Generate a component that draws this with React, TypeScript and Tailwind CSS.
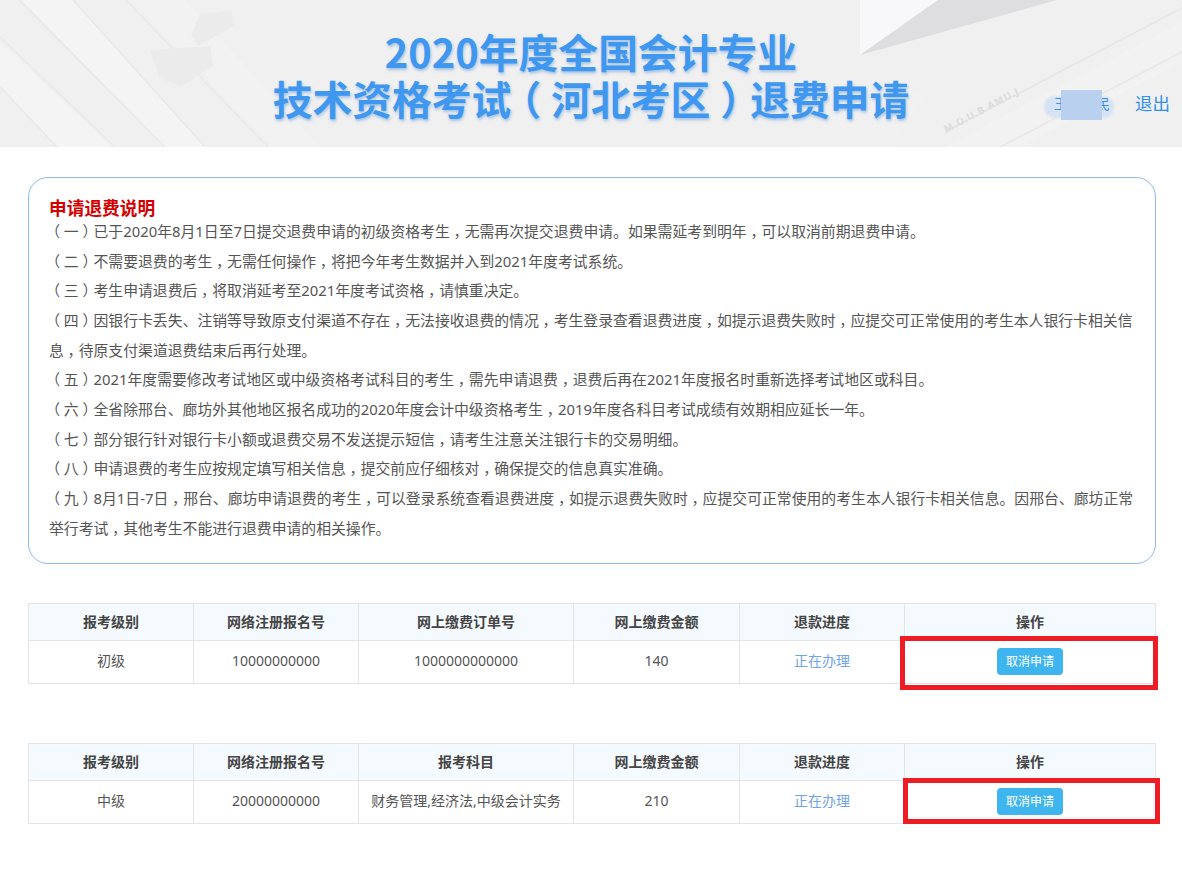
import React from 'react';

const notes = [
  '（一）已于2020年8月1日至7日提交退费申请的初级资格考生，无需再次提交退费申请。如果需延考到明年，可以取消前期退费申请。',
  '（二）不需要退费的考生，无需任何操作，将把今年考生数据并入到2021年度考试系统。',
  '（三）考生申请退费后，将取消延考至2021年度考试资格，请慎重决定。',
  '（四）因银行卡丢失、注销等导致原支付渠道不存在，无法接收退费的情况，考生登录查看退费进度，如提示退费失败时，应提交可正常使用的考生本人银行卡相关信息，待原支付渠道退费结束后再行处理。',
  '（五）2021年度需要修改考试地区或中级资格考试科目的考生，需先申请退费，退费后再在2021年度报名时重新选择考试地区或科目。',
  '（六）全省除邢台、廊坊外其他地区报名成功的2020年度会计中级资格考生，2019年度各科目考试成绩有效期相应延长一年。',
  '（七）部分银行针对银行卡小额或退费交易不发送提示短信，请考生注意关注银行卡的交易明细。',
  '（八）申请退费的考生应按规定填写相关信息，提交前应仔细核对，确保提交的信息真实准确。',
  '（九）8月1日-7日，邢台、廊坊申请退费的考生，可以登录系统查看退费进度，如提示退费失败时，应提交可正常使用的考生本人银行卡相关信息。因邢台、廊坊正常举行考试，其他考生不能进行退费申请的相关操作。',
];

// the original font centres full-width punctuation in its box, Noto hugs the neighbour:
// trim it to half width with "halt" and pad it back to one em
const Centred = ({ text }: { text: string }) => (
  <>
    {text.split(/([（），])/).map((part, i) =>
      /^[（），]$/.test(part) ? (
        <span key={i} className="px-[0.25em] [font-feature-settings:'halt']">{part}</span>
      ) : (
        part
      ),
    )}
  </>
);

const HeaderArt = () => (
  <svg className="absolute inset-0 h-full w-full" viewBox="0 0 1182 147" preserveAspectRatio="none">
    {/* left: pale keyboard-like strips */}
    <g fill="#f4f4f4">
      <path d="M22 0 L73 0 L205 147 L165 147 Z" />
      <path d="M0 42 L0 85 L57 147 L112 147 Z" />
      <path d="M130 0 L185 0 L320 147 L272 147 Z" opacity="0.6" />
    </g>
    <g stroke="#e8e8e8" strokeWidth="1.2" fill="none">
      <path d="M19 0 L165 147" />
      <path d="M73 0 L205 147" />
      <path d="M0 37 L115 147" />
      <path d="M0 87 L57 147" />
      <path d="M126 0 L268 147" />
    </g>
    <g fill="#ebebeb">
      <path d="M200 14 L232 10 L234 26 L198 46 L191 36 Z" />
      <path d="M150 50 L210 46 L213 66 L180 87 L160 78 Z" />
    </g>
    {/* right: folded paper and pen */}
    <path d="M860 55 L860 0 L938 0 Z" fill="#f8f8fa" />
    <path d="M938 0 L1057 0 L860 55 Z" fill="#dedee0" />
    <path d="M945 147 L1182 22 L1182 62 L1020 147 Z" fill="#f3f2f2" />
    <path d="M945 132 L1182 8" stroke="#e6e5e5" strokeWidth="1.5" fill="none" />
    <path d="M1000 147 L1182 52" stroke="#e8e7e7" strokeWidth="1.5" fill="none" />
    <path d="M800 147 L850 95 L930 90 L890 147 Z" fill="#f2f1f1" />
    <text x="946" y="133" transform="rotate(-28 946 133)" fill="#dcdcdc" fontSize="10" fontWeight="700" letterSpacing="1">M.O.U.B AMU.J</text>
  </svg>
);

const CancelCell = () => (
  <button className="h-[27px] w-[66px] rounded-[4px] bg-[#3fb5f0] text-[12px] text-white">取消申请</button>
);

const RefundTable = ({ third, rows }: { third: string; rows: string[] }) => (
  <table className="w-[1128px] table-fixed border-collapse text-[14px] text-[#555]">
    <colgroup>
      <col className="w-[165px]" />
      <col className="w-[165px]" />
      <col className="w-[215px]" />
      <col className="w-[166px]" />
      <col className="w-[165px]" />
      <col />
    </colgroup>
    <thead>
      <tr className="h-[37px] bg-[#f5faff] font-bold text-[#444]">
        {['报考级别', '网络注册报名号', third, '网上缴费金额', '退款进度', '操作'].map((h) => (
          <th key={h} className="border border-[#e2e4e8] pb-[2px] text-center font-bold">{h}</th>
        ))}
      </tr>
    </thead>
    <tbody>
      <tr className="h-[43px]">
        {rows.map((c, i) => (
          <td key={i} className="border border-[#e2e4e8] pb-[3px] text-center">{c}</td>
        ))}
        <td className="border border-[#e2e4e8] pb-[3px] text-center text-[#6fa3ea]">正在办理</td>
        <td className="border border-[#e2e4e8] pb-[1px] text-center"><CancelCell /></td>
      </tr>
    </tbody>
  </table>
);

export default function App() {
  return (
    <div className="relative min-h-[885px] bg-white font-['Noto_Sans','Noto_Sans_CJK_SC',sans-serif]">
      <header className="relative h-[147px] overflow-hidden bg-[#f0f0f0]">
        <HeaderArt />
        <h1 className="relative pt-[27px] text-center font-['Noto_Sans_CJK_SC',sans-serif] text-[39.8px] leading-[47px] font-bold text-[#3f97ef] [text-shadow:1px_2px_3px_rgba(90,150,220,0.5)]">
          2020年度全国会计专业<br /><Centred text="技术资格考试（河北考区）退费申请" />
        </h1>
        <div className="absolute top-[96px] left-[1044px] h-[22px] w-[70px] rounded-[10px] bg-[#d6e3f4] blur-[1px]" />
        <div className="absolute top-[93px] left-[1054px] text-[14px] leading-[22px] whitespace-nowrap text-[#3d8fe8]">王某某民</div>
        <div className="absolute top-[90px] left-[1061px] h-[30px] w-[41px] bg-[#b9d0ef]" />
        <a className="absolute top-[91px] left-[1135px] text-[17.5px] leading-[24px] text-[#2e8fee]">退出</a>
      </header>

      <main className="px-[28px] pt-[30px]">
        <section className="h-[387px] w-[1128px] rounded-[20px] border border-[#8fb8ee] pt-[18px] pr-[15px] pl-[20px]">
          <h2 className="text-[17.7px] leading-[24px] font-bold text-[#d40000]">申请退费说明</h2>
          <div className="-mt-[3px] text-[14.85px] leading-[29.65px] text-[#555]">
            {notes.map((n) => <p key={n}><Centred text={n} /></p>)}
          </div>
        </section>

        <div className="mt-[39px] flex flex-col gap-[59px]">
          <RefundTable third="网上缴费订单号" rows={['初级', '10000000000', '1000000000000', '140']} />
          <RefundTable third="报考科目" rows={['中级', '20000000000', '财务管理,经济法,中级会计实务', '210']} />
        </div>
      </main>

      <div className="absolute top-[636px] left-[900px] h-[54px] w-[258px] border-[5px] border-[#ee1c25]" />
      <div className="absolute top-[778px] left-[903px] h-[46px] w-[257px] border-[5px] border-[#ee1c25]" />
    </div>
  );
}
